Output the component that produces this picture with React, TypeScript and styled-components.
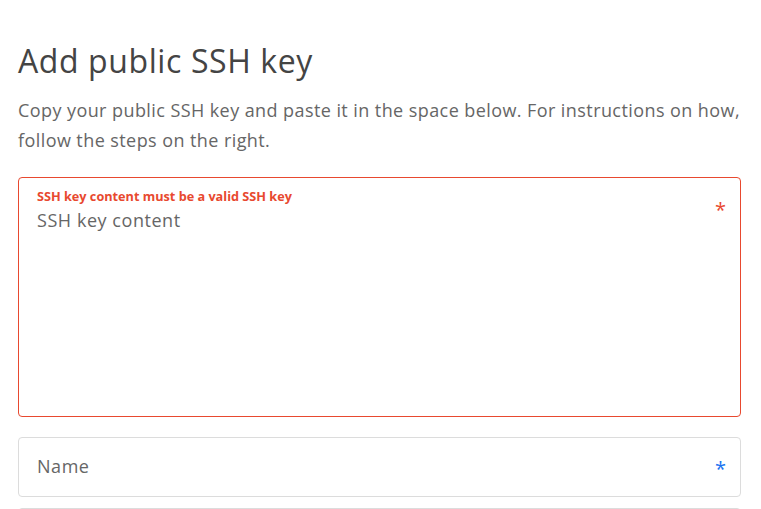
import React from "react";
import styled, { createGlobalStyle } from "styled-components";

const Global = createGlobalStyle`
  html, body { margin: 0; padding: 0; background: #fff; }
  body { font-family: "Open Sans", "Noto Sans", sans-serif; -webkit-font-smoothing: antialiased; }
`;

const Page = styled.div`
  padding: 39px 20px 0 18px;
  display: flex;
  flex-direction: column;
  overflow: hidden;
  height: 509px;
  box-sizing: border-box;
`;

const Title = styled.h1`
  margin: 0;
  font-size: 32px;
  line-height: 44px;
  font-weight: 400;
  letter-spacing: 0.6px;
  color: #444;
`;

const Lead = styled.p`
  margin: 12px 0 0;
  font-size: 18px;
  line-height: 30px;
  letter-spacing: 0.42px;
  color: #666;
`;

const Field = styled.div<{ $error?: boolean; $height: number; $muted?: boolean }>`
  position: relative;
  box-sizing: border-box;
  height: ${(p) => p.$height}px;
  border: 1px solid ${(p) => (p.$error ? "#e8492f" : "#dcdcdc")};
  border-radius: 4px;
  background: ${(p) => (p.$muted ? "#f3f3f3" : "#fff")};
  padding: 0 18px;
  display: flex;
  flex-direction: column;
  flex-shrink: 0;
`;

const ErrorLabel = styled.div`
  margin-top: 10px;
  font-size: 12.7px;
  line-height: 16px;
  font-weight: 700;
  color: #e8492f;
`;

const Placeholder = styled.div<{ $top: number }>`
  margin-top: ${(p) => p.$top}px;
  font-size: 18px;
  line-height: 24px;
  letter-spacing: 0.55px;
  color: #666;
`;

const Star = styled.span<{ $color: string; $top: number }>`
  position: absolute;
  right: 14px;
  top: ${(p) => p.$top}px;
  font-size: 20px;
  line-height: 20px;
  color: ${(p) => p.$color};
`;

const Stack = styled.div`
  display: flex;
  flex-direction: column;
  margin-top: 22px;
`;

const Gap = styled.div<{ $h: number }>`
  height: ${(p) => p.$h}px;
  flex-shrink: 0;
`;

export default function App() {
  return (
    <>
      <Global />
      <Page>
        <Title>Add public SSH key</Title>
        <Lead>
          Copy your public SSH key and paste it in the space below. For instructions on how,
          follow the steps on the right.
        </Lead>
        <Stack>
          <Field $error $height={240}>
            <ErrorLabel>SSH key content must be a valid SSH key</ErrorLabel>
            <Placeholder $top={4}>SSH key content</Placeholder>
            <Star $color="#e8492f" $top={22}>*</Star>
          </Field>
          <Gap $h={20} />
          <Field $height={60}>
            <Placeholder $top={16}>Name</Placeholder>
            <Star $color="#1a73f0" $top={21}>*</Star>
          </Field>
          <Gap $h={11} />
          <Field $height={60} $muted />
        </Stack>
      </Page>
    </>
  );
}
